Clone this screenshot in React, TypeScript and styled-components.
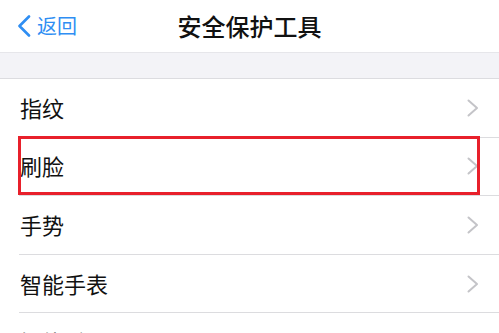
import React from "react";
import styled, { createGlobalStyle } from "styled-components";

const GlobalStyle = createGlobalStyle`
  html, body {
    margin: 0;
    padding: 0;
    background: #ffffff;
  }
  body {
    font-family: "Noto Sans CJK SC", "Noto Sans", sans-serif;
    overflow: hidden;
  }
`;

const Page = styled.div`
  width: 499px;
  height: 333px;
  overflow: hidden;
  background: #ffffff;
`;

const NavBar = styled.header`
  position: relative;
  height: 52px;
  display: flex;
  align-items: center;
  justify-content: center;
  border-bottom: 1px solid #e6e6ea;
`;

const BackButton = styled.button`
  position: absolute;
  left: 17px;
  top: 0;
  bottom: 0;
  display: flex;
  align-items: center;
  gap: 6px;
  padding: 0;
  border: none;
  background: none;
  color: #2f8ef3;
  font-family: inherit;
  font-size: 20px;
  line-height: 1;
  cursor: pointer;
`;

const Title = styled.h1`
  margin: 0;
  font-size: 24px;
  line-height: 1;
  font-weight: 500;
  color: #111111;
`;

const SectionGap = styled.div`
  height: 25px;
  background: #f3f3f7;
  border-bottom: 1px solid #dcdce0;
`;

const List = styled.ul`
  list-style: none;
  margin: 0;
  padding: 0;
`;

const Row = styled.li`
  position: relative;
  box-sizing: border-box;
  height: 58.6px;
  margin-left: 19px;
  padding-right: 20px;
  display: flex;
  align-items: center;
  justify-content: space-between;
  border-bottom: 1px solid #dcdcdf;
`;

const Label = styled.span`
  padding-left: 1px;
  padding-bottom: 2px;
  font-size: 22px;
  line-height: 1;
  color: #111111;
`;

const Highlight = styled.div`
  position: absolute;
  left: -1px;
  right: 19px;
  top: -2px;
  height: 59px;
  box-sizing: border-box;
  border: 3px solid #e8202b;
  pointer-events: none;
`;

const BackChevron = () => (
  <svg width="14" height="22" viewBox="0 0 14 22" fill="none">
    <path
      d="M12 1.5 L2.5 11 L12 20.5"
      stroke="#2f8ef3"
      strokeWidth="2.6"
      strokeLinecap="round"
      strokeLinejoin="round"
    />
  </svg>
);

const Chevron = () => (
  <svg width="12" height="18" viewBox="0 0 12 18" fill="none">
    <path
      d="M1.5 1.5 L10 9 L1.5 16.5"
      stroke="#c4c4c8"
      strokeWidth="2"
      strokeLinecap="round"
      strokeLinejoin="round"
    />
  </svg>
);

const items = [
  { label: "指纹" },
  { label: "刷脸", highlighted: true },
  { label: "手势" },
  { label: "智能手表" },
  { label: "智能手环" },
];

export default function App() {
  return (
    <Page>
      <GlobalStyle />
      <NavBar>
        <BackButton>
          <BackChevron />
          返回
        </BackButton>
        <Title>安全保护工具</Title>
      </NavBar>
      <SectionGap />
      <List>
        {items.map((item) => (
          <Row key={item.label}>
            <Label>{item.label}</Label>
            <Chevron />
            {item.highlighted && <Highlight />}
          </Row>
        ))}
      </List>
    </Page>
  );
}
